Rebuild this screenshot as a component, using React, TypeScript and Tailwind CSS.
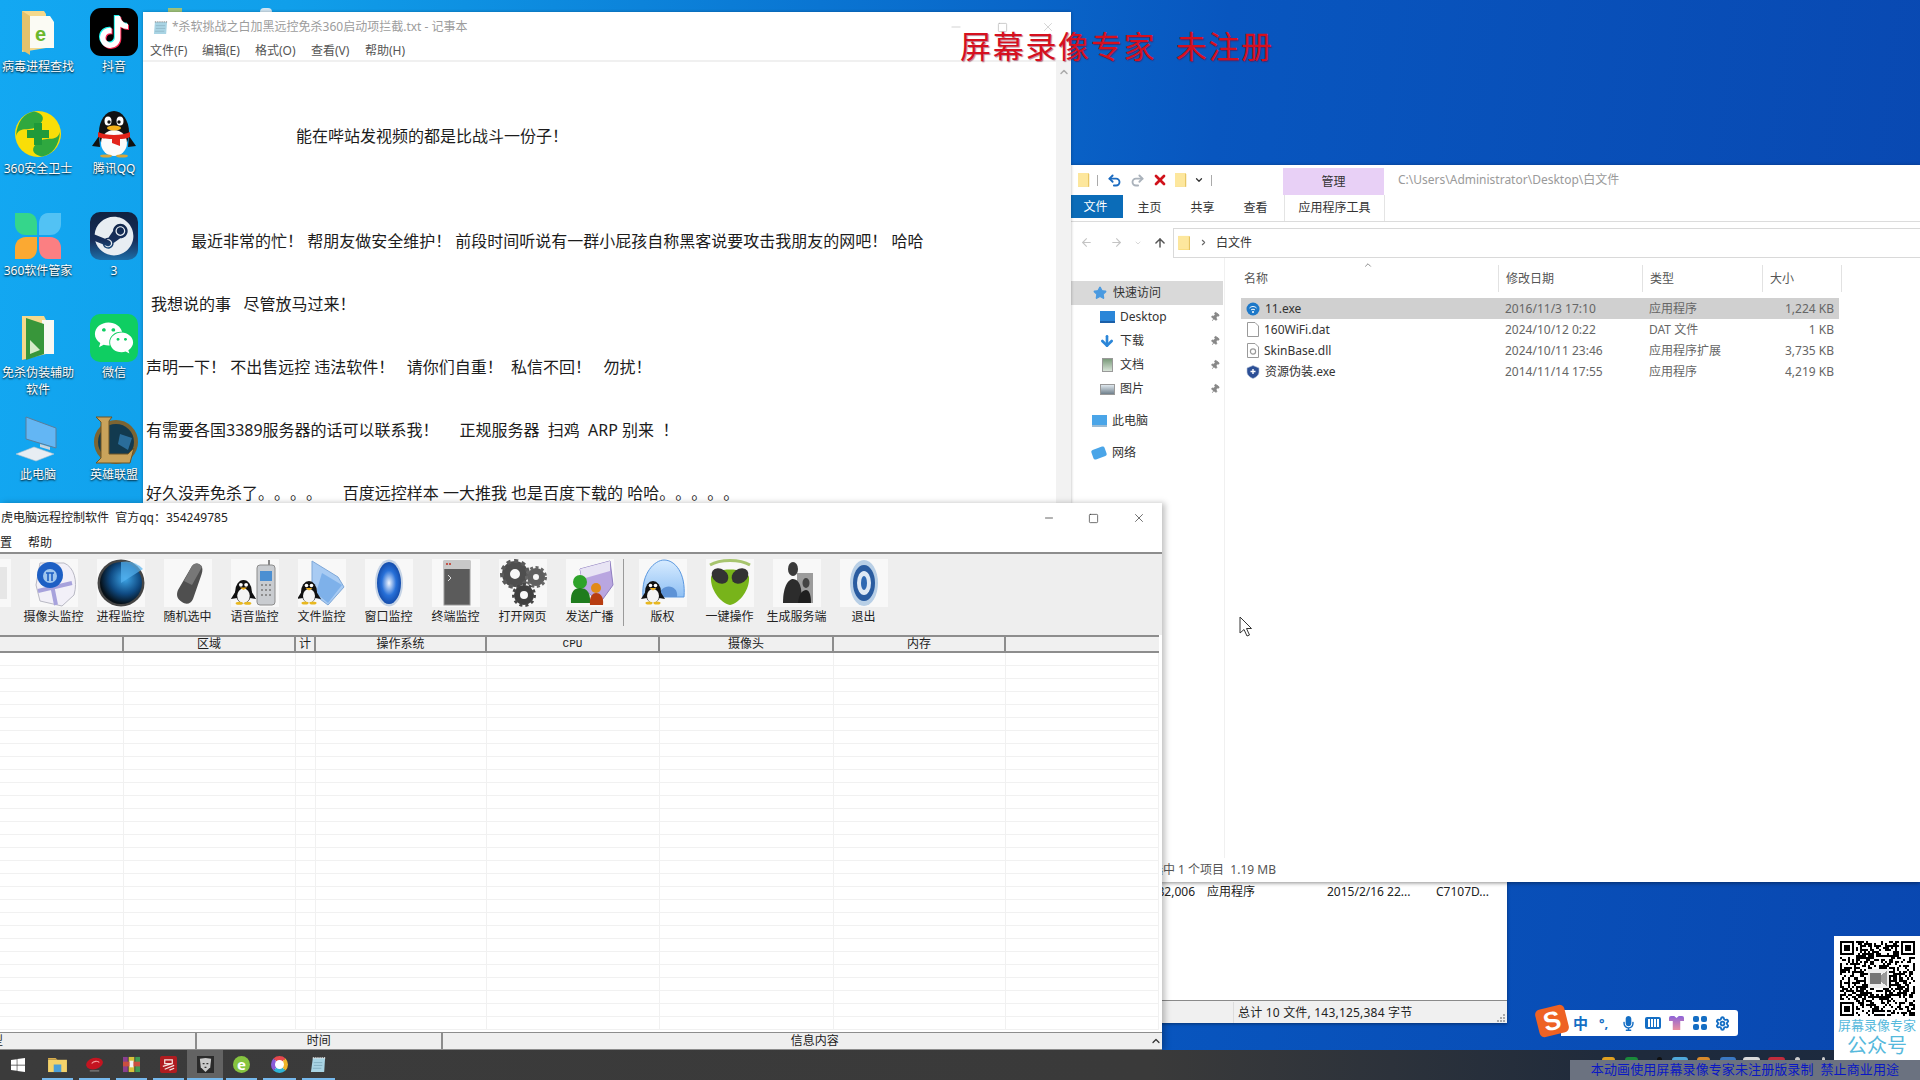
import type { ReactNode } from "react";
import { ArrowLeft, ArrowRight, ArrowUp, ChevronDown, ChevronRight, ChevronUp, Minus, Pin, Redo2, Settings, Square, Star, Undo2, X } from "lucide-react";
import { FaMicrophone, FaTiktok, FaWeixin, FaWindows, FaSteam } from "react-icons/fa";

/* ---------- shared drawings ---------- */

function Penguin({ x, y, s = 1 }: { x: number; y: number; s?: number }) {
  return (
    <g transform={`translate(${x} ${y}) scale(${s})`}>
      <ellipse cx="10" cy="13" rx="8" ry="11" fill="#111" />
      <path d="M3 12 L-2 20 L4 19 Z M17 12 L22 20 L16 19 Z" fill="#111" />
      <ellipse cx="10" cy="17" rx="6" ry="7" fill="#f4f4f4" />
      <circle cx="7.5" cy="6.5" r="1.8" fill="#fff" />
      <circle cx="12.5" cy="6.5" r="1.8" fill="#fff" />
      <path d="M6.5 9 L13.5 9 L10 11.5 Z" fill="#f0b01a" />
      <ellipse cx="6" cy="24" rx="3.5" ry="1.5" fill="#e8b820" />
      <ellipse cx="14" cy="24" rx="3.5" ry="1.5" fill="#e8b820" />
    </g>
  );
}

function Folder({ className }: { className: string }) {
  return (
    <svg viewBox="0 0 14 18" className={className}>
      <path d="M0 1 H12 L13 2 V17 H0 Z" fill="#f9db7c" />
      <path d="M0 1 H12 V16 H0 Z" fill="#fde79d" />
      <path d="M12 1 L13 2 V17 H12 Z" fill="#e0bd5a" />
    </svg>
  );
}

/* ---------- desktop icons ---------- */

function DeskFolderE() {
  return (
    <svg viewBox="0 0 48 48" className="w-12 h-12">
      <path d="M8 3 H30 L32 6 V40 L8 44 Z" fill="#f5d98c" />
      <path d="M16 8 H36 L40 14 V40 H16 Z" fill="#fbfbf4" />
      <path d="M8 3 L16 8 V47 L8 42 Z" fill="#e4c26c" />
      <text x="21" y="33" fontSize="20" fontWeight="700" fill="#6ab82c" fontFamily="Liberation Sans">e</text>
    </svg>
  );
}

function Douyin() {
  return (
    <div className="relative w-12 h-12 rounded-[11px] bg-black flex items-center justify-center">
      <FaTiktok className="absolute w-8 h-8 text-[#25f4ee] -translate-x-[1px] -translate-y-[1px]" />
      <FaTiktok className="absolute w-8 h-8 text-[#fe2c55] translate-x-[1px] translate-y-[1px]" />
      <FaTiktok className="absolute w-8 h-8 text-white" />
    </div>
  );
}

function Safe360() {
  return (
    <svg viewBox="0 0 48 48" className="w-12 h-12">
      <circle cx="24" cy="24" r="23" fill="#f9de08" />
      <path d="M2 26 C6 14 16 24 26 14 C32 8 28 3 20 1.5 C10 3 3 12 2 26 Z" fill="#2fa83f" />
      <path d="M46 22 C42 34 32 24 22 34 C16 40 20 45 28 46.5 C38 45 45 36 46 22 Z" fill="#2fa83f" />
      <path d="M20 13 H28 V20 H35 V28 H28 V35 H20 V28 H13 V20 H20 Z" fill="#1f9a3a" />
    </svg>
  );
}

function QQ() {
  return (
    <svg viewBox="0 0 48 48" className="w-12 h-12">
      <ellipse cx="24" cy="22" rx="15" ry="21" fill="#111" />
      <path d="M9 26 L2 36 L10 37 Z M39 26 L46 36 L38 37 Z" fill="#111" />
      <ellipse cx="24" cy="33" rx="13" ry="13" fill="#fbfbfb" />
      <ellipse cx="18" cy="11" rx="3.5" ry="4.5" fill="#fff" />
      <ellipse cx="30" cy="11" rx="3.5" ry="4.5" fill="#fff" />
      <circle cx="19" cy="12" r="1.7" fill="#111" />
      <circle cx="29" cy="12" r="1.7" fill="#111" />
      <ellipse cx="24" cy="18" rx="7" ry="2.5" fill="#f5b21a" />
      <path d="M8 22 C16 26 32 26 40 22 L40 27 C36 29 32 29 30 29 L30 36 L22 33 L22 29 C16 29 10 28 8 27 Z" fill="#e2231a" />
      <ellipse cx="16" cy="46" rx="6" ry="1.6" fill="#d9a63a" />
      <ellipse cx="32" cy="46" rx="6" ry="1.6" fill="#d9a63a" />
    </svg>
  );
}

function Soft360() {
  return (
    <svg viewBox="0 0 48 48" className="w-12 h-12">
      <path d="M1 1 H14 C20 1 23 6 23 12 V23 H12 C5 23 1 18 1 12 Z" fill="#35d68b" />
      <path d="M47 1 H34 C28 1 25 6 25 12 V23 H36 C43 23 47 18 47 12 Z" fill="#52c2f4" />
      <path d="M1 47 H14 C20 47 23 42 23 36 V25 H12 C5 25 1 30 1 36 Z" fill="#fba932" />
      <path d="M47 47 H34 C28 47 25 42 25 36 V25 H36 C43 25 47 30 47 36 Z" fill="#fb7f82" />
    </svg>
  );
}

function Steam() {
  return (
    <div className="w-12 h-12 rounded-[10px] bg-[linear-gradient(180deg,#0f2140_0%,#17305c_60%,#1d6ea8_100%)] flex items-center justify-center">
      <FaSteam className="w-10 h-10 text-[#e8edf2]" />
    </div>
  );
}

function WeChat() {
  return (
    <div className="w-12 h-12 rounded-[10px] bg-[#0fce62] flex items-center justify-center">
      <FaWeixin className="w-10 h-10 text-white" />
    </div>
  );
}

function DeskFolderGreen() {
  return (
    <svg viewBox="0 0 48 48" className="w-12 h-12">
      <path d="M8 2 H30 L32 6 V40 L8 46 Z" fill="#f5d98c" />
      <path d="M28 6 H40 L40 40 H28 Z" fill="#f8f8f2" />
      <path d="M12 4 L30 10 V40 L12 46 Z" fill="#38963a" />
      <path d="M16 26 L26 36 L16 40 Z" fill="#d6ecc8" />
    </svg>
  );
}

function Computer() {
  return (
    <svg viewBox="0 0 48 48" className="w-12 h-12">
      <path d="M12 1 L42 12 V32 L12 23 Z" fill="#63b6f4" stroke="#5a7d9a" strokeWidth="1" />
      <path d="M26 28 L36 31 V34 L26 31 Z" fill="#c9d4de" />
      <path d="M2 38 L20 31 L40 38 L22 45 Z" fill="#e7edf3" stroke="#b6c2cd" strokeWidth="0.6" />
    </svg>
  );
}

function Lol() {
  return (
    <svg viewBox="0 0 48 48" className="w-12 h-12">
      <circle cx="26" cy="26" r="20" fill="#123a4f" stroke="#7b6432" strokeWidth="4" />
      <path d="M30 18 L42 22 L38 34 L28 28 Z" fill="#2a6d9a" />
      <path d="M6 1 H22 L19 5 V38 H38 L44 32 L40 47 H6 L11 42 V6 Z" fill="#c9a35b" stroke="#6d5426" strokeWidth="1" />
    </svg>
  );
}

const desktopIcons: { label: string; icon: ReactNode }[] = [
  { label: "病毒进程查找", icon: <DeskFolderE /> },
  { label: "抖音", icon: <Douyin /> },
  { label: "360安全卫士", icon: <Safe360 /> },
  { label: "腾讯QQ", icon: <QQ /> },
  { label: "360软件管家", icon: <Soft360 /> },
  { label: "3", icon: <Steam /> },
  { label: "免杀伪装辅助软件", icon: <DeskFolderGreen /> },
  { label: "微信", icon: <WeChat /> },
  { label: "此电脑", icon: <Computer /> },
  { label: "英雄联盟", icon: <Lol /> },
];

/* ---------- toolbar icons ---------- */

const toolDefs = (
  <svg width="0" height="0" className="absolute">
    <defs>
      <radialGradient id="radar" cx="60%" cy="40%" r="60%">
        <stop offset="0%" stopColor="#3ea6e8" />
        <stop offset="60%" stopColor="#0f4a82" />
        <stop offset="100%" stopColor="#061018" />
      </radialGradient>
      <radialGradient id="oval" cx="50%" cy="50%" r="60%">
        <stop offset="0%" stopColor="#f2f7ff" />
        <stop offset="50%" stopColor="#2770d8" />
        <stop offset="100%" stopColor="#0b3b96" />
      </radialGradient>
      <linearGradient id="igloo" x1="0" y1="0" x2="0" y2="1">
        <stop offset="0%" stopColor="#d8ecff" />
        <stop offset="100%" stopColor="#8fc0f4" />
      </linearGradient>
    </defs>
  </svg>
);

const toolIcons: Record<string, ReactNode> = {
  控: <rect x="4" y="8" width="40" height="32" fill="#e6e6e6" />,
  摄像头监控: (
    <>
      <path d="M10 4 H34 C44 8 48 22 44 36 L32 47 L10 42 L6 26 Z" fill="#f2f0f8" stroke="#b9b9c4" />
      <path d="M8 32 L42 24 M22 26 L26 46" stroke="#a7a2dc" strokeWidth="4" />
      <circle cx="20" cy="16" r="13" fill="#1d5fc4" />
      <circle cx="20" cy="17" r="7" fill="#9fc6ee" />
      <path d="M16 14 H24 M18 14 V22 M22 14 V22" stroke="#1d5fc4" strokeWidth="1.6" />
    </>
  ),
  进程监控: (
    <>
      <circle cx="24" cy="24" r="23.5" fill="#444" />
      <circle cx="24" cy="24" r="21" fill="url(#radar)" />
      <path d="M24 24 L46 10 A24 24 0 0 0 24 3 Z" fill="#56b2ef" opacity="0.7" />
    </>
  ),
  随机选中: (
    <>
      <path d="M18 43 C13 40 12 36 14 31 L28 7 C31 3 36 4 38 8 C39 11 38 14 37 17 L29 40 C27 45 22 46 18 43 Z" fill="#4f4f4f" />
      <path d="M28 7 C31 3 36 4 38 8 L28 26 L20 22 Z" fill="#777" />
    </>
  ),
  语音监控: (
    <>
      <rect x="26" y="6" width="18" height="40" rx="3" fill="#c9ccd0" stroke="#8c8c8c" />
      <rect x="29" y="12" width="12" height="10" fill="#4b8fd2" />
      <path d="M38 6 V1" stroke="#888" strokeWidth="2" />
      <path d="M30 26 H40 M30 31 H40 M30 36 H40" stroke="#8d8d8d" strokeWidth="2" strokeDasharray="2 2" />
      <Penguin x={2} y={19} s={1.05} />
    </>
  ),
  文件监控: (
    <>
      <path d="M14 2 L40 18 L46 28 L30 46 L14 34 Z" fill="#a8cbf3" stroke="#7fa8d8" />
      <path d="M24 14 L44 26 L30 44 L18 34 Z" fill="#7eb1ea" />
      <Penguin x={1} y={20} s={1} />
    </>
  ),
  窗口监控: (
    <>
      <ellipse cx="24" cy="24" rx="14" ry="23.5" fill="#c6d4e6" />
      <ellipse cx="24" cy="24" rx="12" ry="21" fill="url(#oval)" />
    </>
  ),
  终端监控: (
    <>
      <rect x="12" y="2" width="26" height="44" fill="#5b5b5b" stroke="#999" />
      <rect x="12" y="2" width="26" height="8" fill="#c8c8c8" />
      <path d="M14 5 H20" stroke="#c2554a" strokeWidth="2" strokeDasharray="2 1" />
      <path d="M16 16 L19 19 L16 22" stroke="#ddd" fill="none" strokeWidth="1" />
    </>
  ),
  打开网页: (
    <>
      <circle cx="16" cy="15" r="9" fill="none" stroke="#4e4e4e" strokeWidth="8" />
      <circle cx="16" cy="15" r="13" fill="none" stroke="#5a5a5a" strokeWidth="4" strokeDasharray="4 3.5" />
      <circle cx="37" cy="18" r="6" fill="none" stroke="#5f5f5f" strokeWidth="6" />
      <circle cx="37" cy="18" r="9.5" fill="none" stroke="#666" strokeWidth="3" strokeDasharray="3 2.5" />
      <circle cx="25" cy="36" r="7" fill="none" stroke="#3f3f3f" strokeWidth="6" />
      <circle cx="25" cy="36" r="10.5" fill="none" stroke="#474747" strokeWidth="3" strokeDasharray="3 3" />
    </>
  ),
  发送广播: (
    <>
      <path d="M14 10 L44 2 L47 26 L34 44 L18 30 Z" fill="#b9a6e0" stroke="#8f7ec0" />
      <path d="M14 10 L44 2 L44 12 L16 20 Z" fill="#e8e4f4" />
      <circle cx="14" cy="23" r="7" fill="#2ea32a" />
      <path d="M5 44 C4 32 9 29 14 29 C19 29 25 32 24 44 Z" fill="#1f7c1e" />
      <circle cx="30" cy="29" r="5" fill="#e28a17" />
      <path d="M24 46 C23 37 27 34 30 34 C34 34 38 37 37 46 Z" fill="#b83d12" />
    </>
  ),
  版权: (
    <>
      <path d="M4 38 C2 14 16 1 25 1 C36 1 47 14 45 38 Z" fill="url(#igloo)" stroke="#5a98e0" />
      <path d="M20 38 C20 24 40 24 38 38 Z" fill="#5e93d6" />
      <Penguin x={4} y={20} s={1} />
    </>
  ),
  一键操作: (
    <>
      <path d="M4 6 C14 0 34 0 44 6" stroke="#a7c56e" strokeWidth="3" fill="none" />
      <path d="M24 46 C14 44 4 30 5 18 C8 8 40 8 43 18 C44 30 34 44 24 46 Z" fill="#78b41a" />
      <ellipse cx="14" cy="17" rx="9" ry="7" transform="rotate(35 14 17)" fill="#333" />
      <ellipse cx="34" cy="17" rx="9" ry="7" transform="rotate(-35 34 17)" fill="#333" />
    </>
  ),
  生成服务端: (
    <>
      <rect x="24" y="14" width="16" height="30" fill="#9c9c9c" />
      <ellipse cx="20" cy="10" rx="5" ry="7" fill="#3a3a3a" />
      <path d="M10 44 C10 26 16 20 20 20 C26 20 30 28 28 44 Z" fill="#2c2c2c" />
      <ellipse cx="33" cy="24" rx="3.5" ry="5" fill="#444" />
      <path d="M25 44 C26 34 30 31 33 31 C36 31 38 35 38 44 Z" fill="#1f1f1f" />
    </>
  ),
  退出: (
    <>
      <ellipse cx="24" cy="24" rx="14" ry="23" fill="#b8cfe6" />
      <ellipse cx="24" cy="24" rx="11" ry="18" fill="#2a5ca0" />
      <ellipse cx="24" cy="24" rx="7" ry="12" fill="#dfe9f4" />
      <ellipse cx="24" cy="24" rx="3" ry="7" fill="#2f69b2" />
    </>
  ),
};

function ToolButton({ label }: { label: string }) {
  return (
    <div className="w-[67px] shrink-0 flex flex-col items-center">
      <svg viewBox="0 0 48 48" className="w-12 h-12 bg-[#f8f8f8]">
        {toolIcons[label]}
      </svg>
      <span className="mt-[1px] text-[12px] leading-[18px] whitespace-nowrap text-[#222]">{label}</span>
    </div>
  );
}

/* ---------- small explorer / taskbar icons ---------- */

function QrCode() {
  const size = 37;
  const cells: ReactNode[] = [];
  let seed = 7391;
  const inFinder = (x: number, y: number) => (x < 8 && y < 8) || (x > size - 9 && y < 8) || (x < 8 && y > size - 9);
  for (let y = 0; y < size; y++) {
    for (let x = 0; x < size; x++) {
      seed = (seed * 1103515245 + 12345) & 0x7fffffff;
      if (!inFinder(x, y) && (seed >> 16) % 100 < 52) {
        cells.push(<rect key={`${x}-${y}`} x={x} y={y} width="1" height="1" />);
      }
    }
  }
  const finder = (x: number, y: number) => (
    <g key={`${x}${y}`}>
      <rect x={x} y={y} width="7" height="7" />
      <rect x={x + 1} y={y + 1} width="5" height="5" fill="#fff" />
      <rect x={x + 2} y={y + 2} width="3" height="3" />
    </g>
  );
  return (
    <svg viewBox="0 0 37 37" shapeRendering="crispEdges" className="w-[75px] h-[75px]">
      {cells}
      {finder(0, 0)}
      {finder(30, 0)}
      {finder(0, 30)}
      <rect x="14" y="14" width="10" height="9" fill="#eee" />
      <rect x="15" y="16" width="5" height="5" fill="#777" />
      <path d="M20 17 L23 15 V22 L20 20 Z" fill="#999" />
    </svg>
  );
}

const taskbarIcons: { active?: boolean; width: number; icon: ReactNode }[] = [
  {
    width: 37,
    icon: (
      <svg viewBox="0 0 20 18" className="w-[19px] h-[17px]">
        <path d="M0 4 H20 V17 H0 Z" fill="#f4d26a" />
        <path d="M0 2 H8 L10 4 H0 Z" fill="#d9ae4c" />
        <rect x="6" y="9" width="8" height="8" fill="#4b9fd8" />
      </svg>
    ),
  },
  {
    width: 37,
    icon: (
      <svg viewBox="0 0 20 18" className="w-[19px] h-[17px]">
        <ellipse cx="10" cy="8" rx="9" ry="6" fill="#c41420" transform="rotate(-15 10 8)" />
        <path d="M7 8 C9 5 14 5 15 7" stroke="#f4a0a0" strokeWidth="1.2" fill="none" />
        <rect x="5" y="15" width="10" height="1.5" fill="#777" />
      </svg>
    ),
  },
  {
    width: 37,
    icon: (
      <svg viewBox="0 0 18 18" className="w-[17px] h-[17px]">
        <rect y="1" width="5" height="16" fill="#8a3f8f" />
        <rect x="6" y="1" width="6" height="16" fill="#d8c23a" />
        <rect x="13" y="1" width="5" height="16" fill="#3e9a55" />
        <rect y="6" width="18" height="5" fill="#c9503f" />
        <rect x="7" y="5" width="4" height="7" fill="#f2f2f2" />
      </svg>
    ),
  },
  {
    width: 37,
    icon: (
      <svg viewBox="0 0 18 18" className="w-[17px] h-[17px]">
        <rect width="18" height="18" rx="2" fill="#b01c20" />
        <path d="M5 4 H13 V8 H5 Z M3 11 L13 8 M5 14 L15 10 M10 15 L15 13" stroke="#f5e4e0" strokeWidth="1.3" fill="none" />
      </svg>
    ),
  },
  {
    width: 36,
    active: true,
    icon: (
      <svg viewBox="0 0 18 18" className="w-[17px] h-[17px]">
        <rect width="18" height="18" fill="#2a2a2a" />
        <path d="M3 3 L9 2 L15 3 L14 12 L9 17 L4 12 Z" fill="#c9c9c9" />
        <path d="M6 8 H8 M10 8 H12 M8 12 H10" stroke="#333" strokeWidth="1.3" />
      </svg>
    ),
  },
  {
    width: 37,
    icon: (
      <div className="w-[17px] h-[17px] rounded-full bg-[#86c440] flex items-center justify-center text-[15px] leading-none font-bold text-white">e</div>
    ),
  },
  {
    width: 39,
    icon: <div className="w-[17px] h-[17px] rounded-full border-[4px] border-[#2fb5d6] border-t-[#e5484d] border-r-[#f0b429] border-l-[#8a5cd8] bg-white" />,
  },
  {
    width: 39,
    icon: (
      <svg viewBox="0 0 18 18" className="w-[17px] h-[17px]">
        <path d="M3 2 H16 L15 17 H1 Z" fill="#a9d4e4" />
        <path d="M3 2 H16" stroke="#e4e4e4" strokeWidth="2" strokeDasharray="1 1" />
        <path d="M4 7 H13 M4 10 H13 M3 13 H12" stroke="#7aa8ba" strokeWidth="0.8" />
      </svg>
    ),
  },
];

// tops of the tray icons that stick out above the recorder's banner
const trayTips = [
  { w: 13, gap: 0, c: "bg-[#e0a020]" },
  { w: 13, gap: 10, c: "bg-[#1a8a3a]" },
  { w: 5, gap: 19, c: "bg-[#111111]" },
  { w: 16, gap: 10, c: "bg-[#4fa8dc]" },
  { w: 13, gap: 9, c: "bg-[#d88a2c]" },
  { w: 16, gap: 10, c: "bg-[#3a78c4]" },
  { w: 17, gap: 7, c: "bg-[#d9d9d9]" },
  { w: 17, gap: 8, c: "bg-[#c22c3c]" },
  { w: 5, gap: 10, c: "bg-[#cccccc]" },
  { w: 3, gap: 22, c: "bg-[#cccccc]" },
];

/* ---------- data ---------- */

const notepadMenu = [
  { label: "文件(F)", width: "w-[52px]" },
  { label: "编辑(E)", width: "w-[53px]" },
  { label: "格式(O)", width: "w-[56px]" },
  { label: "查看(V)", width: "w-[54px]" },
  { label: "帮助(H)", width: "w-[50px]" },
];

const notepadLines = [
  { text: "能在哔站发视频的都是比战斗一份子！", indent: "pl-[153px]", gap: "mt-[66px]" },
  { text: "最近非常的忙！ 帮朋友做安全维护！ 前段时间听说有一群小屁孩自称黑客说要攻击我朋友的网吧！ 哈哈", indent: "pl-[48px]", gap: "mt-[89px]" },
  { text: "我想说的事   尽管放马过来！", indent: "pl-[8px]", gap: "mt-[47px]" },
  { text: "声明一下！ 不出售远控 违法软件！   请你们自重！  私信不回！   勿扰！", indent: "pl-[3px]", gap: "mt-[47px]" },
  { text: "有需要各国3389服务器的话可以联系我！     正规服务器  扫鸡  ARP 别来  ！", indent: "pl-[3px]", gap: "mt-[47px]" },
  { text: "好久没弄免杀了。。。。     百度远控样本 一大推我 也是百度下载的 哈哈。。。。。", indent: "pl-[3px]", gap: "mt-[47px]" },
];

const files = [
  { name: "11.exe", date: "2016/11/3 17:10", type: "应用程序", size: "1,224 KB", selected: true, kind: "wifi" },
  { name: "160WiFi.dat", date: "2024/10/12 0:22", type: "DAT 文件", size: "1 KB", kind: "blank" },
  { name: "SkinBase.dll", date: "2024/10/11 23:46", type: "应用程序扩展", size: "3,735 KB", kind: "dll" },
  { name: "资源伪装.exe", date: "2014/11/14 17:55", type: "应用程序", size: "4,219 KB", kind: "shield" },
];

const remoteColumns = [
  { label: "", width: "w-[124px]" },
  { label: "区域", width: "w-[172px]" },
  { label: "计", width: "w-[20px]" },
  { label: "操作系统", width: "w-[171px]" },
  { label: "CPU", width: "w-[173px]" },
  { label: "摄像头", width: "w-[174px]" },
  { label: "内存", width: "w-[172px]" },
  { label: "", width: "w-[153px]" },
];

const toolsLeft = ["控", "摄像头监控", "进程监控", "随机选中", "语音监控", "文件监控", "窗口监控", "终端监控", "打开网页", "发送广播"];
const toolsRight = ["版权", "一键操作", "生成服务端", "退出"];
const rows = Array.from({ length: 29 }, (_, i) => i);

function FileIcon({ kind }: { kind: string }) {
  if (kind === "wifi") {
    return (
      <svg viewBox="0 0 14 14" className="w-[14px] h-[14px]">
        <circle cx="7" cy="7" r="6.5" fill="#1d78c8" />
        <path d="M3.5 6 C5.5 4 8.5 4 10.5 6 M5 8 C6 7 8 7 9 8" stroke="#fff" strokeWidth="1" fill="none" />
        <circle cx="7" cy="10" r="1" fill="#fff" />
      </svg>
    );
  }
  if (kind === "shield") {
    return (
      <svg viewBox="0 0 14 14" className="w-[14px] h-[14px]">
        <path d="M7 0.5 L13 3 V7 C13 10 10 12.5 7 13.5 C4 12.5 1 10 1 7 V3 Z" fill="#2c4f96" stroke="#b6c2d8" strokeWidth="0.6" />
        <path d="M7 4 V9 M4.5 6.5 H9.5" stroke="#fff" strokeWidth="1.4" />
      </svg>
    );
  }
  return (
    <svg viewBox="0 0 12 15" className="w-[12px] h-[15px] ml-[1px]">
      <path d="M0.5 0.5 H8 L11.5 4 V14.5 H0.5 Z" fill="#fff" stroke="#9a9a9a" />
      {kind === "dll" && <circle cx="6" cy="8.5" r="2.6" fill="none" stroke="#9a9a9a" strokeWidth="1.2" />}
    </svg>
  );
}

function NavRow({ label, icon, pin, indent }: { label: string; icon: ReactNode; pin?: boolean; indent: string }) {
  return (
    <div className={`h-6 flex items-center ${indent} text-[12px] text-[#333]`}>
      <span className="w-4 h-4 flex items-center justify-center">{icon}</span>
      <span className="ml-[5px]">{label}</span>
      {pin && <Pin className="ml-auto mr-[4px] w-[10px] h-[10px] fill-[#888] text-[#888] rotate-[35deg]" />}
    </div>
  );
}

export default function App() {
  return (
    <div className="relative w-[1920px] h-[1080px] overflow-hidden font-['Noto_Sans','Noto_Sans_CJK_SC',sans-serif] bg-[linear-gradient(97deg,#13a8f2_0%,#109fea_14%,#0a75d2_40%,#0856bf_60%,#0947b0_100%)]">
      {toolDefs}

      {/* Desktop icons */}
      <div className="absolute left-0 top-[8px] grid grid-cols-[76px_76px] auto-rows-[102px]">
        {desktopIcons.map((d) => (
          <div key={d.label} className="flex flex-col items-center">
            {d.icon}
            <span className="mt-[2px] w-[76px] text-center text-[12px] leading-[17px] text-white [text-shadow:0_1px_2px_#000]">{d.label}</span>
          </div>
        ))}
      </div>

      {/* Icons of a hidden desktop column, peeking over the notepad */}
      <span className="absolute left-[168px] top-[8px] w-[14px] h-[4px] bg-[#9fc27a]" />
      <span className="absolute left-[260px] top-[8px] w-[12px] h-[4px] rounded-t-full bg-[#cfe4f2]" />

      {/* Back window, seen below the explorer */}
      <div className="absolute left-[1100px] top-[880px] w-[407px] h-[143px] bg-white shadow-[0_1px_3px_rgba(0,0,0,0.4)] flex flex-col">
        <div className="flex-1 pt-[3px] flex text-[12px] leading-[17px] text-[#222]">
          <span className="w-[95px] text-right">82,006</span>
          <span className="w-[132px] pl-[12px]">应用程序</span>
          <span className="w-[109px]">2015/2/16 22...</span>
          <span>C7107D...</span>
        </div>
        <div className="h-[23px] pt-[1px] bg-[#f0f0f0] border-t border-[#8a8a8a] flex items-center text-[12px] tracking-[0.2px] text-[#222]">
          <div className="ml-[133px] h-full border-l border-[#ddd] pl-[4px] flex items-center">总计 10 文件, 143,125,384 字节</div>
          <div className="ml-auto mr-[1px] self-end grid grid-cols-3 gap-[1px] p-[1px]">
            <i className="w-[2px] h-[2px]" />
            <i className="w-[2px] h-[2px]" />
            <i className="w-[2px] h-[2px] bg-[#aaa]" />
            <i className="w-[2px] h-[2px]" />
            <i className="w-[2px] h-[2px] bg-[#aaa]" />
            <i className="w-[2px] h-[2px] bg-[#aaa]" />
            <i className="w-[2px] h-[2px] bg-[#aaa]" />
            <i className="w-[2px] h-[2px] bg-[#aaa]" />
            <i className="w-[2px] h-[2px] bg-[#aaa]" />
          </div>
        </div>
      </div>

      {/* Explorer */}
      <div className="absolute left-[1071px] top-[165px] w-[849px] h-[717px] bg-white shadow-[0_1px_4px_rgba(0,0,0,0.45)] flex flex-col text-[#333]">
        <div className="h-[30px] flex items-center">
          <Folder className="ml-[7px] w-[12px] h-[16px]" />
          <span className="ml-[7px] w-px h-[11px] bg-[#aaa]" />
          <Undo2 className="ml-[9px] w-[15px] h-[15px] text-[#1b6bc0]" strokeWidth={3} />
          <Redo2 className="ml-[8px] w-[15px] h-[15px] text-[#aab2bb]" strokeWidth={3} />
          <X className="ml-[7px] w-[16px] h-[16px] text-[#d0121b]" strokeWidth={4} />
          <Folder className="ml-[7px] w-[12px] h-[16px]" />
          <ChevronDown className="ml-[7px] w-[10px] h-[10px] text-[#333]" strokeWidth={3} />
          <span className="ml-[7px] w-px h-[11px] bg-[#aaa]" />
          <div className="ml-[71px] w-[101px] h-[27px] mt-[3px] bg-[#e8d0f6] flex items-center justify-center text-[12px]">管理</div>
          <span className="ml-[14px] text-[12px] text-[#9a9a9a]">C:\Users\Administrator\Desktop\白文件</span>
        </div>
        <div className="h-[27px] flex items-stretch text-[12px] border-b border-[#dcdcdc]">
          <div className="w-[52px] h-[23px] pr-[3px] bg-[#0b6cb8] text-white flex items-center justify-center">文件</div>
          <div className="w-[53px] h-[26px] flex items-center justify-center">主页</div>
          <div className="w-[53px] h-[26px] flex items-center justify-center">共享</div>
          <div className="w-[53px] h-[26px] flex items-center justify-center">查看</div>
          <div className="ml-[2px] w-[101px] h-[26px] flex items-center justify-center border-x border-[#e4e4e4]">应用程序工具</div>
        </div>
        <div className="h-[36px] pt-[6px] pb-[1px] flex items-center">
          <ArrowLeft className="ml-[9px] w-[13px] h-[13px] text-[#c4c4c4]" />
          <ArrowRight className="ml-[17px] w-[13px] h-[13px] text-[#c4c4c4]" />
          <ChevronDown className="ml-[11px] w-[8px] h-[8px] text-[#c4c4c4]" />
          <ArrowUp className="ml-[11px] w-[14px] h-[14px] text-[#555]" strokeWidth={2.5} />
          <div className="ml-[6px] flex-1 h-[30px] border border-[#d9d9d9] border-r-0 flex items-center text-[12px]">
            <Folder className="ml-[4px] w-[13px] h-[16px]" />
            <ChevronRight className="ml-[8px] w-[9px] h-[9px] text-[#666]" strokeWidth={3} />
            <span className="ml-[8px]">白文件</span>
          </div>
        </div>

        <div className="flex-1 flex min-h-0">
          <div className="w-[154px] pt-[23px] border-r border-[#f0f0f0]">
            <div className="w-[152px] bg-[#d9d9d9]">
              <NavRow
                label="快速访问"
                indent="pl-[21px]"
                icon={<Star className="w-[14px] h-[14px] fill-[#4a9ae0] text-[#4a9ae0]" />}
              />
            </div>
            <NavRow label="Desktop" pin indent="pl-[28px]" icon={<span className="w-[15px] h-[12px] bg-[#2b86d8] border-b-2 border-[#1a5fa8]" />} />
            <NavRow label="下载" pin indent="pl-[28px]" icon={<ArrowUp className="w-[16px] h-[16px] rotate-180 text-[#2b86d8]" strokeWidth={4} />} />
            <NavRow label="文档" pin indent="pl-[28px]" icon={<span className="w-[11px] h-[14px] border border-[#999] bg-[linear-gradient(#7a9a7a,#d8e4d8)]" />} />
            <NavRow label="图片" pin indent="pl-[28px]" icon={<span className="w-[15px] h-[11px] border border-[#999] bg-[linear-gradient(#dfe8ee,#70808c)]" />} />
            <div className="mt-[8px]">
              <NavRow label="此电脑" indent="pl-[20px]" icon={<span className="w-[15px] h-[12px] bg-[#4aa5e8] border-b-2 border-[#9abbd4]" />} />
            </div>
            <div className="mt-[8px]">
              <NavRow label="网络" indent="pl-[20px]" icon={<span className="w-[14px] h-[10px] bg-[#4aa5e8] rounded-[2px] rotate-[-20deg]" />} />
            </div>
          </div>

          <div className="flex-1 pl-[16px] text-[12px]">
            <div className="h-[34px] pt-[7px] flex">
              <div className="relative w-[257px] pl-[3px] h-[27px] flex items-center text-[#555]">
                名称
                <ChevronUp className="absolute left-[122px] -top-[5px] w-[10px] h-[10px] text-[#777]" />
              </div>
              <div className="w-[144px] pl-[7px] h-[27px] flex items-center text-[#555] border-l border-[#e2e2e2]">修改日期</div>
              <div className="w-[120px] pl-[7px] h-[27px] flex items-center text-[#555] border-l border-[#e2e2e2]">类型</div>
              <div className="w-[80px] pl-[7px] h-[27px] flex items-center text-[#555] border-x border-[#e2e2e2]">大小</div>
            </div>
            <div className="mt-[6px]">
              {files.map((f) => (
                <div key={f.name} className={`w-[598px] h-[21px] flex items-center ${f.selected ? "bg-[#d0d0d0]" : ""}`}>
                  <div className="w-[257px] flex items-center pl-[5px]">
                    <FileIcon kind={f.kind} />
                    <span className="ml-[5px] text-[#333]">{f.name}</span>
                  </div>
                  <span className="w-[144px] pl-[7px] text-[#666]">{f.date}</span>
                  <span className="w-[120px] pl-[7px] text-[#666]">{f.type}</span>
                  <span className="w-[72px] text-right text-[#666]">{f.size}</span>
                </div>
              ))}
            </div>
          </div>
        </div>

        <div className="h-[24px] pl-[80px] flex items-center text-[12px] text-[#555] whitespace-pre">选中 1 个项目  1.19 MB</div>
      </div>

      {/* Notepad */}
      <div className="absolute left-[143px] top-[12px] w-[928px] h-[492px] bg-white flex flex-col shadow-[0_0_3px_rgba(0,0,0,0.3)]">
        <div className="h-[30px] flex items-center text-[12px] text-[#9c9c9c]">
          <svg viewBox="0 0 16 16" className="ml-[10px] w-[15px] h-[15px]">
            <path d="M2 2 H15 L14 15 H1 Z" fill="#a9d4e4" />
            <path d="M2 2 H15" stroke="#888" strokeWidth="1.5" strokeDasharray="1 1" />
            <path d="M3 6 H13 M3 9 H13 M2 12 H12" stroke="#8ab0c0" strokeWidth="0.7" />
          </svg>
          <span className="ml-[4px]">*杀软挑战之白加黑远控免杀360启动项拦截.txt - 记事本</span>
          <Minus className="ml-auto w-[14px] h-[14px] text-[#b5b5b5]" strokeWidth={1} />
          <Square className="ml-[34px] w-[11px] h-[11px] text-[#b5b5b5]" strokeWidth={1.5} />
          <X className="ml-[33px] mr-[16px] w-[14px] h-[14px] text-[#b5b5b5]" strokeWidth={1} />
        </div>
        <div className="h-[20px] pl-[7px] flex items-center text-[12px] text-[#555] border-b-2 border-[#f0f0f0]">
          {notepadMenu.map((m) => (
            <span key={m.label} className={`${m.width} whitespace-nowrap`}>
              {m.label}
            </span>
          ))}
        </div>
        <div className="flex-1 flex min-h-0 overflow-hidden">
          <div className="flex-1 text-[16px] leading-[16px] text-[#1c1c1c] whitespace-pre [text-spacing-trim:space-all]">
            {notepadLines.map((l) => (
              <div key={l.text} className={`${l.indent} ${l.gap}`}>
                {l.text}
              </div>
            ))}
          </div>
          <div className="w-[15px] bg-[#f2f2f2] flex justify-center pt-[4px]">
            <ChevronUp className="w-[12px] h-[12px] text-[#aaa]" strokeWidth={3} />
          </div>
        </div>
      </div>

      {/* Remote control window */}
      <div className="absolute left-0 top-[503px] w-[1162px] h-[547px] bg-white flex flex-col shadow-[3px_0_6px_rgba(0,0,0,0.25)] text-[#222]">
        <div className="h-[30px] flex items-center text-[12px] whitespace-pre">
          <span className="ml-[1px]">虎电脑远程控制软件  官方qq：354249785</span>
          <Minus className="ml-auto w-[12px] h-[12px] text-[#333]" strokeWidth={1.5} />
          <Square className="ml-[33px] w-[11px] h-[11px] text-[#333]" strokeWidth={1.5} />
          <X className="ml-[33px] mr-[16px] w-[14px] h-[14px] text-[#333]" strokeWidth={1.2} />
        </div>
        <div className="h-[21px] flex items-center text-[12px] border-b-2 border-[#8d8d8d]">
          <span className="w-[28px] overflow-hidden whitespace-nowrap">置</span>
          <span>帮助</span>
        </div>
        <div className="h-[81px] pt-[5px] bg-[#eeeeee] flex items-start overflow-hidden">
          <div className="-ml-[47px] flex">
            {toolsLeft.map((t) => (
              <ToolButton key={t} label={t} />
            ))}
          </div>
          <span className="mr-[5px] w-px h-[67px] bg-[#9a9a9a] shrink-0" />
          <div className="flex">
            {toolsRight.map((t) => (
              <ToolButton key={t} label={t} />
            ))}
          </div>
        </div>
        <div className="w-[1159px] h-[18px] flex bg-[#f0f0f0] border-y-2 border-[#8d8d8d] text-[12px] leading-[14px]">
          {remoteColumns.map((c, i) => (
            <div key={i} className={`${c.width} h-full shrink-0 flex items-center justify-center border-r-2 border-[#8d8d8d] last:border-r-0 overflow-hidden whitespace-nowrap ${c.label === "CPU" ? "font-['Liberation_Mono'] text-[11px]" : ""}`}>
              {c.label}
            </div>
          ))}
        </div>
        <div className="flex-1 min-h-0 w-[1159px] overflow-hidden">
          {rows.map((r) => (
            <div key={r} className="h-[13px] flex border-b border-[#f1f1f1]">
              {remoteColumns.map((c, i) => (
                <div key={i} className={`${c.width} shrink-0 border-r border-[#f1f1f1]`} />
              ))}
            </div>
          ))}
        </div>
        <div className="h-[18px] flex bg-[#efefef] border-y border-[#8d8d8d] text-[12px] leading-[16px]">
          <div className="w-[197px] border-r-2 border-[#8d8d8d] overflow-hidden whitespace-nowrap -indent-[9px]">型</div>
          <div className="w-[246px] border-r-2 border-[#8d8d8d] text-center">时间</div>
          <div className="w-[707px] pl-[38px] text-center">信息内容</div>
          <ChevronUp className="ml-[1px] w-[12px] h-[12px] mt-[2px] text-[#333]" strokeWidth={2.5} />
        </div>
      </div>

      {/* Mouse pointer */}
      <svg viewBox="0 0 14 22" className="absolute left-[1239px] top-[616px] w-[14px] h-[22px]">
        <path d="M1 1 V17 L5 13.5 L8 20 L10.5 19 L7.5 12.5 H12.5 Z" fill="#fff" stroke="#333" strokeWidth="1" />
      </svg>

      {/* Sogou input bar */}
      <div className="absolute left-[1537px] top-[1006px] flex items-center">
        <div className="z-10 w-[30px] h-[28px] rounded-[5px] bg-[#ee6223] rotate-[-14deg] flex items-center justify-center text-[26px] leading-none font-black text-white font-['Liberation_Sans']">S</div>
        <div className="-ml-[6px] w-[177px] h-[26px] mt-[4px] bg-white rounded-r-[3px] flex items-center pl-[12px] text-[#146ec4]">
          <span className="w-[26px] text-[15px] leading-none font-bold">中</span>
          <span className="w-[22px] text-[13px] leading-none font-bold">°,</span>
          <FaMicrophone className="w-[15px] h-[15px] mr-[9px]" />
          <span className="w-[16px] h-[12px] mr-[8px] rounded-[2px] border-2 border-[#146ec4] bg-[repeating-linear-gradient(90deg,#146ec4_0_1px,#fff_1px_3px)]" />
          <span className="w-[15px] h-[14px] mr-[9px] rounded-[2px] bg-[linear-gradient(#8d63d8,#e98fa0)] [clip-path:polygon(0_0,35%_0,50%_15%,65%_0,100%_0,100%_35%,75%_35%,75%_100%,25%_100%,25%_35%,0_35%)]" />
          <span className="w-[14px] h-[14px] mr-[8px] grid grid-cols-2 gap-[2px]">
            <i className="rounded-[2px] bg-[#146ec4]" />
            <i className="rounded-[2px] bg-[#146ec4]" />
            <i className="rounded-[2px] bg-[#146ec4]" />
            <i className="rounded-[2px] bg-[#146ec4]" />
          </span>
          <Settings className="w-[15px] h-[15px]" strokeWidth={3} />
        </div>
      </div>

      {/* Taskbar */}
      <div className="absolute left-0 top-[1050px] w-[1920px] h-[30px] bg-[linear-gradient(90deg,#3b3b3b_0%,#3a3a3a_60%,#1e2a3c_85%,#1c2a40_100%)] flex items-center">
        <FaWindows className="ml-[10px] w-[16px] h-[16px] text-white" />
        <div className="ml-[13px] flex h-full">
          {taskbarIcons.map((t, i) => (
            <div
              key={i}
              style={{ width: t.width }}
              className={`h-full flex items-center justify-center border-b-2 border-[#76b9ed] ${t.active ? "bg-[#636363]" : "[border-image:linear-gradient(90deg,transparent_4px,#76b9ed_4px,#76b9ed_calc(100%-4px),transparent_calc(100%-4px))_1]"}`}
            >
              {t.icon}
            </div>
          ))}
        </div>
        <div className="ml-[1264px] self-start mt-[7px] flex">
          {trayTips.map((t, i) => (
            <span key={i} style={{ width: t.w, marginLeft: t.gap }} className={`h-[3px] rounded-t-[3px] ${t.c}`} />
          ))}
        </div>
      </div>

      {/* Recorder watermark */}
      <div className="absolute left-[960px] top-[27px] text-[31px] leading-[38px] tracking-[1.7px] text-[#d6101e] whitespace-pre [text-shadow:1px_1px_1px_rgba(120,0,40,0.5)]">屏幕录像专家  未注册</div>
      <div className="absolute left-[1834px] top-[936px] w-[86px] h-[124px] bg-white flex flex-col items-center pt-[5px] text-[#56b9dc]">
        <QrCode />
        <span className="mt-[1px] text-[13px] leading-[16px] whitespace-nowrap">屏幕录像专家</span>
        <span className="mt-[3px] text-[20px] leading-[20px]">公众号</span>
      </div>
      <div className="absolute left-[1570px] top-[1060px] w-[350px] h-[20px] bg-[#6b7280] flex items-center justify-center text-[13px] tracking-[0.1px] text-[#0a18c4] whitespace-pre">本动画使用屏幕录像专家未注册版录制  禁止商业用途</div>
    </div>
  );
}
